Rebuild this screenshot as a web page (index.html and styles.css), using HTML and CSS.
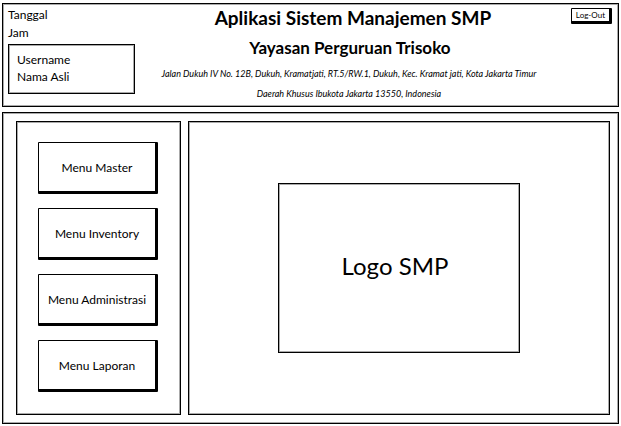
FILE: index.html
```html
<!DOCTYPE html>
<html lang="id">
<head>
<meta charset="utf-8">
<meta name="viewport" content="width=device-width, initial-scale=1">
<title>Aplikasi Sistem Manajemen SMP</title>
<link rel="stylesheet" href="styles.css">
</head>
<body>
<header class="frame header">
  <div class="info">
    <div class="info-line">Tanggal</div>
    <div class="info-line">Jam</div>
    <div class="frame user">
      <div>Username</div>
      <div>Nama Asli</div>
    </div>
  </div>
  <div class="heading">
    <h1>Aplikasi Sistem Manajemen SMP</h1>
    <h2>Yayasan Perguruan Trisoko</h2>
    <p>Jalan Dukuh IV No. 12B, Dukuh, Kramatjati, RT.5/RW.1, Dukuh, Kec. Kramat jati, Kota Jakarta Timur</p>
    <p>Daerah Khusus Ibukota Jakarta 13550, Indonesia</p>
  </div>
  <button class="button logout" type="button">Log-Out</button>
</header>
<div class="frame workspace">
  <nav class="frame menu">
    <button class="button menu-item" type="button">Menu Master</button>
    <button class="button menu-item" type="button">Menu Inventory</button>
    <button class="button menu-item" type="button">Menu Administrasi</button>
    <button class="button menu-item" type="button">Menu Laporan</button>
  </nav>
  <main class="frame content">
    <div class="frame logo">Logo SMP</div>
  </main>
</div>
</body>
</html>
```
FILE: styles.css
```css
* {
  box-sizing: border-box;
}

body {
  display: flex;
  flex-direction: column;
  gap: 5px;
  min-height: 100vh;
  margin: 0;
  padding: 3px 2px 2px;
  background: #fff;
  color: #000;
  font: 12px/17px Lato, "Liberation Sans", sans-serif;
}

h1,
h2,
p {
  margin: 0;
}

/* Black outline with a soft inner edge, like a pen stroke */
.frame {
  border: 1px solid #000;
  box-shadow: inset 0 0 0 1px #aaa;
}

.header {
  display: grid;
  grid-template-columns: 127px 1fr auto;
  align-items: start;
  padding: 2px 6px 2px 5px;
}

.info-line {
  line-height: 18px;
}

.user {
  margin-top: 2px;
  padding: 6px 8px 8px;
}

.heading {
  text-align: center;
  white-space: nowrap;
}

.heading h1 {
  font-size: 19px;
  line-height: 24px;
}

.heading h2 {
  margin: 6px 0 4px;
  padding-right: 6px;
  font-size: 17px;
  line-height: 24px;
}

.heading p {
  padding-right: 8px;
  font-size: 9px;
  font-style: italic;
  line-height: 20px;
}

.button {
  border: 1px solid #000;
  border-right-width: 3px;
  border-bottom-width: 3px;
  border-radius: 1px;
  background: #fff;
  color: #000;
  font-family: inherit;
  cursor: pointer;
}

.logout {
  margin-top: 2px;
  padding: 0 4px;
  font-size: 8px;
  line-height: 12px;
}

.workspace {
  display: flex;
  flex: 1;
  gap: 7px;
  padding: 8px 8px 8px 13px;
}

.menu {
  display: flex;
  flex: 0 0 165px;
  flex-direction: column;
  justify-content: center;
  gap: 14px;
  padding: 0 22px 2px 21px;
}

.menu-item {
  height: 52px;
  padding: 0;
  font-size: 12px;
}

.content {
  display: flex;
  flex: 1;
  align-items: center;
  justify-content: center;
}

.logo {
  width: 242px;
  padding: 0 8px 4px 0;
  font-size: 24px;
  line-height: 164px;
  text-align: center;
}
```
